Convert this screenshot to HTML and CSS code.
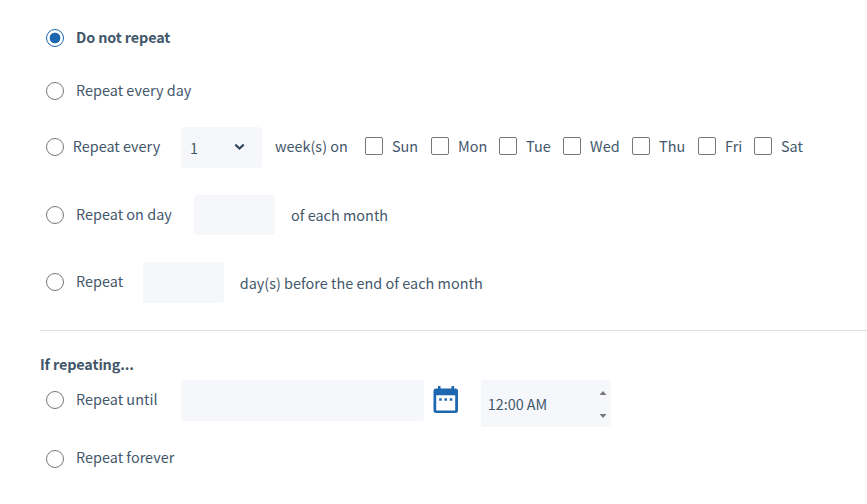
FILE: index.html
```
<!DOCTYPE html>
<html lang="en">
<head>
<meta charset="utf-8">
<title>Repeat schedule</title>
<link rel="stylesheet" href="styles.css">
</head>
<body>
<form class="schedule">
  <div class="row first">
    <input type="radio" name="repeat" id="none" checked>
    <label class="label strong" for="none">Do not repeat</label>
  </div>
  <div class="row daily">
    <input type="radio" name="repeat" id="daily">
    <label class="label" for="daily">Repeat every day</label>
  </div>
  <div class="row weekly">
    <input type="radio" name="repeat" id="weekly">
    <label class="label tight w-weekly" for="weekly">Repeat every</label>
    <div class="field select">
      <span>1</span>
      <svg width="11" height="8" viewBox="0 0 11 8"><path d="M1.3 1.6 5.5 5.5 9.7 1.6" fill="none" stroke="#34495e" stroke-width="2.2"/></svg>
    </div>
    <span class="label w-weeks">week(s) on</span>
    <label class="day sun"><input type="checkbox"><span>Sun</span></label>
    <label class="day mon"><input type="checkbox"><span>Mon</span></label>
    <label class="day tue"><input type="checkbox"><span>Tue</span></label>
    <label class="day wed"><input type="checkbox"><span>Wed</span></label>
    <label class="day thu"><input type="checkbox"><span>Thu</span></label>
    <label class="day fri"><input type="checkbox"><span>Fri</span></label>
    <label class="day sat"><input type="checkbox"><span>Sat</span></label>
  </div>
  <div class="row monthly">
    <input type="radio" name="repeat" id="monthly">
    <label class="label w-monthly" for="monthly">Repeat on day</label>
    <input class="field small" type="text">
    <span class="label suffix">of each month</span>
  </div>
  <div class="row before-end">
    <input type="radio" name="repeat" id="before">
    <label class="label w-before" for="before">Repeat</label>
    <input class="field small" type="text">
    <span class="label suffix">day(s) before the end of each month</span>
  </div>
  <hr>
  <h2>If repeating...</h2>
  <div class="row until">
    <input type="radio" name="end" id="until">
    <label class="label w-until" for="until">Repeat until</label>
    <input class="field date" type="text">
    <svg class="calendar" width="26" height="28" viewBox="0 0 26 28">
      <path fill="#1d66b0" fill-rule="evenodd" d="M5 0h2.500v2.500h11V0H21v2.500h2A2.500 2.500 0 0 1 25 5v19.500A2.500 2.500 0 0 1 22.500 27H3A2.500 2.500 0 0 1 .5 24.500V5A2.500 2.500 0 0 1 3 2.500h2zM3.200 9.300v15.200h19V9.300z"/>
      <path fill="#1d66b0" d="M6.200 12.300h2.500v2.400H6.200zM11.500 12.300h2.500v2.400h-2.500zM16.800 12.300h2.500v2.400h-2.500z"/>
    </svg>
    <div class="time">
      <span>12:00 AM</span>
      <div class="spinner">
        <svg width="8" height="4" viewBox="0 0 8 4"><path d="M.5 4 4 0l3.500 4z" fill="#777"/></svg>
        <svg width="8" height="4" viewBox="0 0 8 4"><path d="M.5 0 4 4l3.500-4z" fill="#777"/></svg>
      </div>
    </div>
  </div>
  <div class="row forever">
    <input type="radio" name="end" id="forever">
    <label class="label" for="forever">Repeat forever</label>
  </div>
</form>
</body>
</html>
```
FILE: styles.css
```
* { box-sizing: border-box; }
body {
  margin: 0;
  background: #fff;
  color: #43576b;
  font: 14.4px/20px "Noto Sans CJK SC", "Noto Sans", sans-serif;
  letter-spacing: 0.03px;
  overflow: hidden;
}
.schedule { padding: 18px 0 0 40px; }
.row { display: flex; align-items: center; height: 40px; padding-left: 6px; white-space: nowrap; }
.row input { margin: 0; flex: none; appearance: none; }
.row input[type="radio"] {
  width: 18px;
  height: 18px;
  border: 1px solid #777;
  border-radius: 50%;
  background: #fff;
}
.row input[type="radio"]:checked {
  border-color: #1d66b0;
  background: radial-gradient(circle, #1d66b0 5px, #fff 5.7px);
}
.label { flex: none; margin: -2px 0 0 12px; }
.label.tight { margin-left: 8.7px; }
.strong, h2 { font-weight: 700; letter-spacing: -0.13px; }
.daily { margin-top: 13px; }
.weekly { margin-top: 16px; }
.monthly { margin-top: 28px; }
.before-end { margin-top: 27px; }
.label.w-weekly { width: 108.3px; }
.label.w-weeks { width: 90px; margin-left: 13px; }
.w-monthly { width: 118px; }
.w-before { width: 67px; }
.w-until { width: 105px; }
.field { flex: none; align-self: flex-start; height: 41px; border: 0; border-radius: 4px; background: #f6f7fb; }
.field.small { width: 81px; }
.monthly .field { height: 40px; }
.select { width: 81px; display: flex; align-items: center; justify-content: space-between; padding: 0 16.5px 0 9px; }
.select svg { margin-top: -1px; }
.label.suffix { margin: 0 0 0 16px; }
.before-end .label.suffix { margin: 2px 0 0 15.7px; }
.day { display: flex; align-items: center; height: 20px; flex: none; }
.day input { width: 18px; height: 18px; border: 1px solid #777; border-radius: 2px; margin-top: -2px; }
.day span { margin: -2px 0 0 9px; }
.sun { width: 66px; }
.mon { width: 68px; }
.tue { width: 64px; }
.wed { width: 69px; }
.thu { width: 66px; }
.fri { width: 56px; }
.sat { width: 50px; }
hr { height: 1px; border: 0; margin: 28px 0 23px; background: #ddd; }
h2 { margin: 0 0 6px; font-size: 14.4px; line-height: 20px; }
.until { height: 40px; }
.date { width: 243px; }
.calendar { margin-left: 9px; flex: none; }
.time {
  display: flex;
  justify-content: space-between;
  align-items: center;
  width: 130px;
  height: 47px;
  align-self: flex-start;
  flex: none;
  margin-left: 22px;
  padding: 1px 4px 0 7px;
  background: #f6f7fb;
}
.time > span { margin-left: -0.3px; letter-spacing: 0; }
.spinner { display: flex; flex-direction: column; gap: 19px; }
.spinner svg { display: block; }
.forever { margin-top: 19px; }
.forever .label { margin-top: -4px; }
```
